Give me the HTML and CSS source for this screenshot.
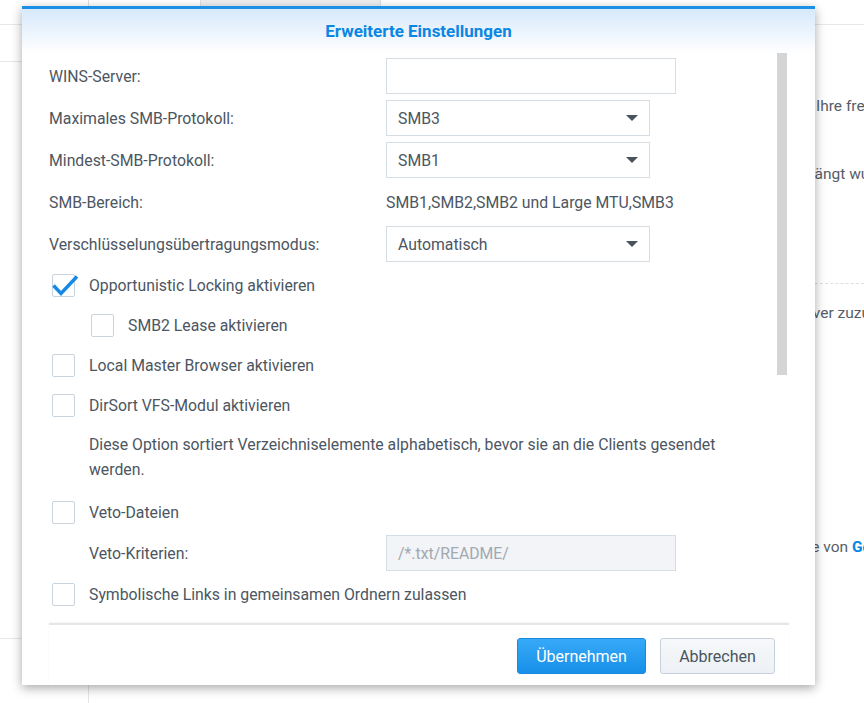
FILE: index.html
```html
<!DOCTYPE html>
<html lang="de">
<head>
<meta charset="utf-8">
<title>Erweiterte Einstellungen</title>
<link rel="stylesheet" href="styles.css">
</head>
<body>
<div class="page">
  <div class="tabs">
    <div class="tab t1"></div>
    <div class="tab t2"></div>
    <div class="tab t3"></div>
  </div>
  <div class="main">
    <aside class="side">
      <div class="side-top"></div>
      <div class="side-mid"></div>
    </aside>
    <section class="content">
      <p class="bg-line l1">Ihre freigegebenen Ordner</p>
      <p class="bg-line l2">hängt wurde</p>
      <div class="bg-sep"></div>
      <p class="bg-line l3">Server zuzuweisen</p>
      <p class="bg-line l4">Seite von <b>Google</b></p>
    </section>
  </div>
</div>

<div class="dialog">
  <header class="dlg-head"><h1>Erweiterte Einstellungen</h1></header>
  <div class="dlg-body">
    <div class="form">
      <div class="row"><span class="lbl">WINS-Server:</span><div class="input"></div></div>
      <div class="row"><span class="lbl">Maximales SMB-Protokoll:</span><div class="select"><span>SMB3</span><i class="caret"></i></div></div>
      <div class="row"><span class="lbl">Mindest-SMB-Protokoll:</span><div class="select"><span>SMB1</span><i class="caret"></i></div></div>
      <div class="row"><span class="lbl">SMB-Bereich:</span><span class="val">SMB1,SMB2,SMB2 und Large MTU,SMB3</span></div>
      <div class="row"><span class="lbl">Verschlüsselungsübertragungsmodus:</span><div class="select"><span>Automatisch</span><i class="caret"></i></div></div>
      <div class="cb-row"><span class="cb checked"><svg viewBox="0 0 23 23" width="23" height="23"><path d="M1.5 11.5 L9 19.5 L25 2.5" fill="none" stroke="#1589e5" stroke-width="3.4"/></svg></span><span>Opportunistic Locking aktivieren</span></div>
      <div class="cb-row sub"><span class="cb"></span><span>SMB2 Lease aktivieren</span></div>
      <div class="cb-row"><span class="cb"></span><span>Local Master Browser aktivieren</span></div>
      <div class="cb-row"><span class="cb"></span><span>DirSort VFS-Modul aktivieren</span></div>
      <p class="desc">Diese Option sortiert Verzeichniselemente alphabetisch, bevor sie an die Clients gesendet werden.</p>
      <div class="cb-row"><span class="cb"></span><span>Veto-Dateien</span></div>
      <div class="row indent"><span class="lbl2">Veto-Kriterien:</span><div class="input disabled">/*.txt/README/</div></div>
      <div class="cb-row"><span class="cb"></span><span>Symbolische Links in gemeinsamen Ordnern zulassen</span></div>
    </div>
    <div class="thumb"></div>
  </div>
  <footer class="dlg-foot">
    <button class="btn primary">Übernehmen</button>
    <button class="btn">Abbrechen</button>
  </footer>
</div>
</body>
</html>
```

FILE: styles.css
```css
* { box-sizing: border-box; margin: 0; padding: 0; }
html, body { width: 864px; height: 703px; overflow: hidden; }
body {
  font-family: Roboto, "Noto Sans", sans-serif;
  color: #4c5662;
  background: #fff;
  position: relative;
}

/* background page */
.page { display: flex; flex-direction: column; height: 703px; }
.tabs { display: flex; height: 25px; flex: none; border-bottom: 1px solid #e6e8ea; }
.tab { border-right: 1px solid #dcdfe2; }
.t1 { width: 89px; }
.t2 { width: 112px; }
.t3 { width: 180px; background: #eceef0; }
.main { flex: 1; display: flex; }
.side { width: 89px; flex: none; border-right: 1px solid #e3e5e7; display: flex; flex-direction: column; }
.side-top { height: 37px; border-bottom: 1px solid #e6e7e9; }
.side-mid { height: 577px; border-bottom: 1px solid #e6e7e9; }
.content { flex: 1; font-size: 15.5px; color: #555e68; white-space: nowrap; overflow: hidden; }
.bg-line { line-height: 20px; }
.l1 { margin-top: 71px; padding-left: 727px; }
.l2 { margin-top: 48px; padding-left: 717px; }
.bg-sep { margin-top: 99px; border-top: 1px dashed #dddfe2; margin-left: 700px; }
.l3 { margin-top: 19px; padding-left: 701px; }
.l4 { margin-top: 214px; padding-left: 696px; }
.l4 b { color: #0a86e3; font-weight: 700; }

/* dialog */
.dialog {
  position: absolute;
  left: 22px; top: 6px;
  width: 793px; height: 679px;
  background: #fff;
  border-top: 3px solid #1a8fe6;
  box-shadow: 0 3px 10px rgba(0, 0, 0, 0.35);
  display: flex; flex-direction: column;
  z-index: 2;
}
.dlg-head {
  height: 44px; flex: none;
  background: linear-gradient(#d6e9fb, #ffffff);
  display: flex; align-items: center; justify-content: center;
}
.dlg-head h1 { font-size: 17px; font-weight: 700; color: #0a86e3; letter-spacing: 0; }

.dlg-body { flex: 1; position: relative; overflow: hidden; padding: 5px 0 0 27px; }
.form { display: flex; flex-direction: column; gap: 6px; width: 720px; font-size: 15.8px; }
.row { display: flex; align-items: center; height: 36px; }
.lbl { width: 337px; flex: none; }
.lbl2 { width: 297px; flex: none; }
.indent { padding-left: 40px; }
.input { width: 290px; height: 36px; border: 1px solid #d5dde5; background: #fff; }
.input.disabled {
  background: #f2f4f7; color: #a1a9b1;
  display: flex; align-items: center; padding-left: 11px;
}
.select {
  width: 264px; height: 36px;
  border: 1px solid #d5dde5; background: #fff;
  display: flex; align-items: center; justify-content: space-between;
  padding: 0 11px 0 11px;
}
.caret {
  width: 0; height: 0;
  border-left: 6px solid transparent;
  border-right: 6px solid transparent;
  border-top: 6px solid #4a525c;
}
.val { color: #4c5662; }

.cb-row { display: flex; align-items: center; height: 34px; }
.cb-row.sub { padding-left: 39px; }
.cb {
  position: relative;
  width: 23px; height: 23px; flex: none;
  margin-left: 3px; margin-right: 14px;
  border: 1px solid #c9d4df; border-radius: 2px; background: #fff;
}
.cb svg { position: absolute; left: -1px; top: -1px; overflow: visible; }
.desc { padding: 4px 0 7px 40px; width: 700px; line-height: 25px; }

.thumb {
  position: absolute; top: 0; right: 28px;
  width: 10px; height: 322px;
  background: #d4d5d7;
}

.dlg-foot {
  flex: none;
  margin: 0 26px 0 27px;
  border-top: 2px solid #e5e6e7;
  box-shadow: 0 -1px 2px rgba(0, 0, 0, 0.04);
  padding: 13px 14px 11px 0;
  display: flex; justify-content: flex-end; gap: 14px;
}
.btn {
  height: 36px; width: 115px;
  font-family: Roboto, "Noto Sans", sans-serif; font-size: 16px;
  border-radius: 3px;
  border: 1px solid #c7d1db;
  background: linear-gradient(#f6f8fa, #edf1f5);
  color: #4a5460;
}
.btn.primary {
  width: 129px;
  background: linear-gradient(#37a9f8, #1790e8);
  border-color: #1a8ae0;
  color: #fff;
}
```
